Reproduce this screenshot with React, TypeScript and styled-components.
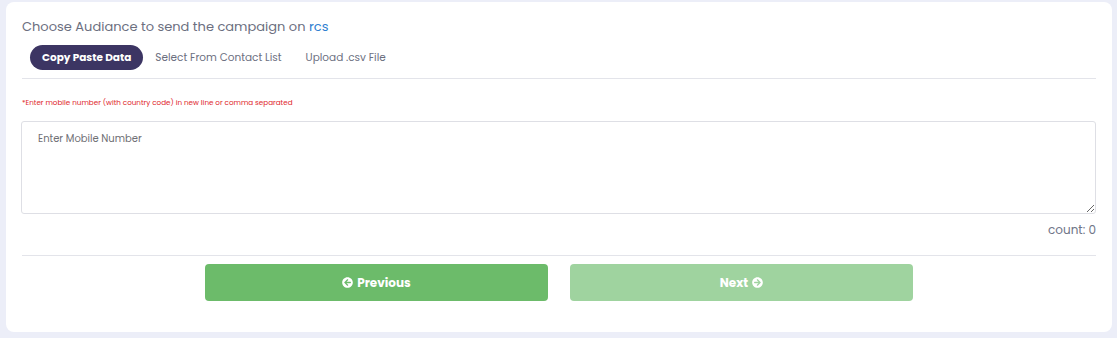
import styled, { createGlobalStyle } from 'styled-components';
import { FaArrowCircleLeft, FaArrowCircleRight } from 'react-icons/fa';

const GlobalStyle = createGlobalStyle`
  body {
    margin: 0;
    background: #eceef8;
    font-family: "Poppins", "Open Sans", "Noto Sans", sans-serif;
  }
`;

const Page = styled.div`
  padding: 2px 5px 8px 6px;
`;

const Card = styled.div`
  background: #ffffff;
  border-radius: 8px;
  padding: 15px 16px 31px 16px;
`;

const Title = styled.div`
  font-size: 13px;
  line-height: 20px;
  color: #6c6f7f;
`;

const Highlight = styled.span`
  color: #2f7fd0;
`;

const Tabs = styled.div`
  display: flex;
  align-items: center;
  margin-top: 8px;
  padding-left: 8px;
  padding-bottom: 8px;
  border-bottom: 1px solid #e3e4ea;
`;

const Tab = styled.button<{ active?: boolean }>`
  height: 25px;
  padding: 0 12px;
  border: none;
  border-radius: 13px;
  font-family: inherit;
  font-size: 10.5px;
  font-weight: ${({ active }) => (active ? 700 : 400)};
  color: ${({ active }) => (active ? '#ffffff' : '#6c6f7f')};
  background: ${({ active }) => (active ? '#3c3563' : 'transparent')};
  cursor: pointer;
`;

const Note = styled.div`
  margin-top: 19px;
  font-size: 7.2px;
  line-height: 10px;
  color: #e0262b;
`;

const NumberInput = styled.textarea`
  display: block;
  box-sizing: border-box;
  width: calc(100% + 1px);
  margin: 13px 0 0 -1px;
  height: 93px;
  padding: 9px 16px;
  border: 1px solid #dedfe5;
  border-radius: 3px;
  font-family: inherit;
  font-size: 10px;
  color: #555;
  outline: none;
  &::placeholder {
    color: #6f6f75;
  }
`;

const Count = styled.div`
  text-align: right;
  margin-top: 8px;
  font-size: 12px;
  line-height: 16px;
  color: #6f7587;
`;

const Footer = styled.div`
  display: flex;
  justify-content: center;
  gap: 22px;
  margin-top: 17px;
  padding-top: 8px;
  border-top: 1px solid #e3e4ea;
`;

const NavButton = styled.button<{ disabled?: boolean }>`
  width: 343px;
  height: 37px;
  border: none;
  border-radius: 4px;
  display: flex;
  align-items: center;
  justify-content: center;
  gap: 4px;
  font-family: inherit;
  font-size: 12px;
  font-weight: 700;
  color: #ffffff;
  background: ${({ disabled }) => (disabled ? '#9fd39f' : '#6cbb6a')};
  cursor: ${({ disabled }) => (disabled ? 'default' : 'pointer')};
  svg {
    font-size: 11px;
  }
`;

const App = () => (
  <Page>
    <GlobalStyle />
    <Card>
      <Title>
        Choose Audiance to send the campaign on <Highlight>rcs</Highlight>
      </Title>
      <Tabs>
        <Tab active>Copy Paste Data</Tab>
        <Tab>Select From Contact List</Tab>
        <Tab>Upload .csv File</Tab>
      </Tabs>
      <Note>*Enter mobile number (with country code) in new line or comma separated</Note>
      <NumberInput placeholder="Enter Mobile Number" />
      <Count>count: 0</Count>
      <Footer>
        <NavButton>
          <FaArrowCircleLeft />
          Previous
        </NavButton>
        <NavButton disabled>
          Next
          <FaArrowCircleRight />
        </NavButton>
      </Footer>
    </Card>
  </Page>
);

export default App;
